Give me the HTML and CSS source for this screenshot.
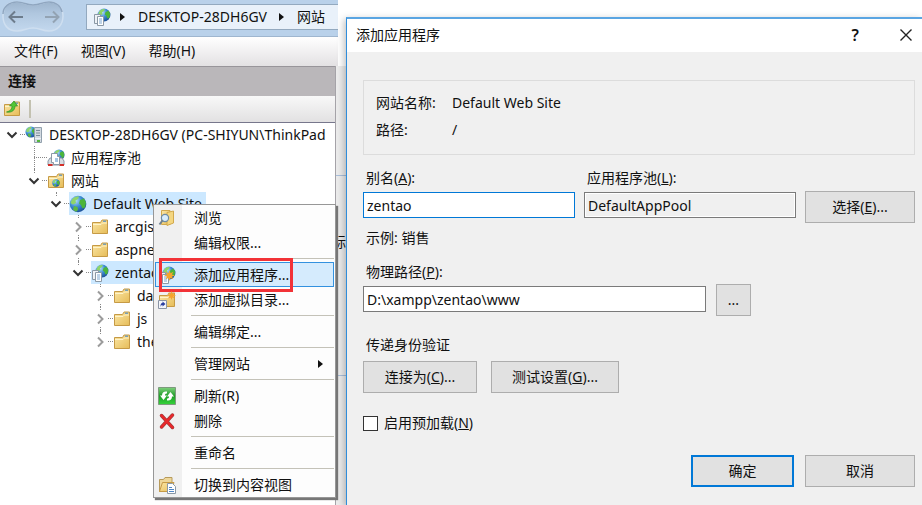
FILE: index.html
```html
<!DOCTYPE html>
<html lang="zh-CN">
<head>
    <meta charset="UTF-8">
    <meta name="viewport" content="width=device-width, initial-scale=1.0">
    <title>添加应用程序</title>
    <link rel="stylesheet" href="styles.css">
</head>
<body>
    <!-- Shared icons -->
    <svg class="sprite" aria-hidden="true">
        <defs>
            <radialGradient id="sea" cx="35%" cy="30%" r="75%">
                <stop offset="0" stop-color="#b5e0fa"/>
                <stop offset="0.5" stop-color="#3d8dd2"/>
                <stop offset="1" stop-color="#1a4d96"/>
            </radialGradient>
            <linearGradient id="yellow" x1="0" y1="0" x2="1" y2="1">
                <stop offset="0" stop-color="#fbe7a6"/>
                <stop offset="1" stop-color="#e6bc58"/>
            </linearGradient>
            <linearGradient id="green" x1="0" y1="0" x2="0" y2="1">
                <stop offset="0" stop-color="#7fd07c"/>
                <stop offset="0.5" stop-color="#1f9c28"/>
                <stop offset="1" stop-color="#35d53a"/>
            </linearGradient>
            <linearGradient id="capsule" x1="0" y1="0" x2="0" y2="1">
                <stop offset="0" stop-color="#9db4cd"/>
                <stop offset="0.4" stop-color="#b0c7df"/>
                <stop offset="1" stop-color="#c3d8ee"/>
            </linearGradient>
        </defs>
        <symbol id="globe" viewBox="0 0 18 18">
            <circle cx="9" cy="9" r="8.3" fill="url(#sea)"/>
            <path d="M3 4.500C5 1.800 8 1 10 1.600L9 4 6.500 5.500 7 8 4 9.500 1.500 8z" fill="#8fd568"/>
            <path d="M11 5l4-1.500 2 4-1 5-2.500 1L12 10l-2-1.500z" fill="#4cb53a"/>
            <path d="M5 11l3.500 1 .5 3-2 1.800-3-2z" fill="#5db843"/>
        </symbol>
        <symbol id="folder" viewBox="0 0 18 18">
            <path d="M1.500 4.500h8L11 2h5.500v13.500h-15z" fill="url(#yellow)" stroke="#c69a45"/>
            <path d="M2 6.500h8l1.500-1.500H16" fill="none" stroke="#fff3c9"/>
            <path d="M12 3.200h3" stroke="#5a94c4" stroke-width="1.200"/>
        </symbol>
        <symbol id="pages" viewBox="0 0 18 18">
            <path d="M1.500 6.500h6v9h-6z" fill="#eef2f6" stroke="#8b98a5"/>
            <path d="M4.500 8.500h6v9h-6z" fill="#fff" stroke="#8b98a5"/>
            <path d="M6 11h3M6 13h3M6 15h3" stroke="#7da7d0"/>
        </symbol>
        <symbol id="app" viewBox="0 0 18 18">
            <use href="#globe" x="4" y="0" width="14" height="14"/>
            <use href="#pages" width="18" height="18"/>
        </symbol>
        <symbol id="server" viewBox="0 0 18 18">
            <use href="#globe" x="0" y="0" width="12" height="12"/>
            <path d="M9.500 1.500h7v15h-7z" fill="#d3dae1" stroke="#92a0ad"/>
            <path d="M11 4.500h4M11 7h4M11 9.500h4" stroke="#7d8d9b"/>
            <path d="M10 12.500h6" stroke="#eef3f6"/>
            <path d="M12 14h3v2h-3z" fill="#54b63e"/>
        </symbol>
        <symbol id="pool" viewBox="0 0 18 18">
            <use href="#globe" x="6" y="0" width="12" height="12"/>
            <path d="M1 12l2-3h12l2 3v4H1z" fill="#d7dce2" stroke="#8b98a5"/>
            <path d="M1 16h4.500M12.500 16H17" stroke="#d3302a" stroke-width="2"/>
            <path d="M4.500 4.500h6v3h2v8h-6v-2h-2z" fill="#fff" stroke="#8b98a5"/>
            <path d="M8 10h3M8 12h3" stroke="#4c8bc8"/>
        </symbol>
        <symbol id="sites" viewBox="0 0 18 18">
            <use href="#folder" width="18" height="18"/>
            <use href="#globe" x="5" y="7" width="8" height="8"/>
        </symbol>
        <symbol id="star" viewBox="0 0 10 10">
            <path d="M5 0l1 3 2.500-1.500L7.200 4 10 5 7.200 6 8.500 8.500 6 7.200 5 10 4 7.200 1.500 8.500 2.800 6 0 5l2.800-1L1.500 1.500 4 3z" fill="#f6a42c"/>
        </symbol>
        <symbol id="connect" viewBox="0 0 18 18">
            <use href="#folder" width="18" height="18"/>
            <path d="M3.500 12C7.500 11 9 9 9 6H6.500L11 1l3.500 5H12c0 4-3 7-8.500 6z" fill="#52c637" stroke="#2f8f22" stroke-width=".7"/>
        </symbol>
        <symbol id="browse" viewBox="0 0 18 18">
            <path d="M3.500 1.500H12v14H3.500z" fill="url(#yellow)" stroke="#d2a94d"/>
            <path d="M9 3.500l6.500-1.500v12L9 16.500z" fill="#f4d680" stroke="#d2a94d"/>
            <circle cx="7" cy="9" r="3.600" fill="#d9edfb" stroke="#6d8ba6" stroke-width="1.200"/>
            <path d="M4.500 11.500L1.500 15.500" stroke="#6f8193" stroke-width="2"/>
        </symbol>
        <symbol id="app-new" viewBox="0 0 18 18">
            <use href="#app" width="18" height="18"/>
            <use href="#star" x="6" y="4" width="11" height="11"/>
        </symbol>
        <symbol id="dir-new" viewBox="0 0 18 18">
            <use href="#folder" width="18" height="18"/>
            <path d="M.5 9.500h8v8h-8z" fill="#f4f6fa" stroke="#8a94a5"/>
            <path d="M2.500 16c0-2 0-4 2-4v-1.500l3 2.500-3 2.500V14c-1 0-1.500.5-2 2z" fill="#2a3fa0"/>
            <use href="#star" x="9" y="0" width="9" height="9"/>
        </symbol>
        <symbol id="refresh" viewBox="0 0 18 18">
            <path d="M.5.5h17v17H.5z" fill="url(#green)" stroke="#7d9a7d"/>
            <path d="M9 4.500C6 4 4 5.500 4 8.500H2L5.500 13 9 8.500H7C7 7 7.500 6.500 9 6.500z" fill="#fff"/>
            <path d="M9 13.500c3 .5 5-1 5-4h2L12.500 5 9 9.500h2c0 1.500-.5 2-2 2z" fill="#fff"/>
        </symbol>
        <symbol id="delete" viewBox="0 0 18 18">
            <path d="M3.500 3.500l11 12M14.500 3L3.500 15" fill="none" stroke="#9c3a3a" stroke-width="3.500" stroke-linecap="round"/>
            <path d="M3.500 3.500l11 12M14.500 3L3.500 15" fill="none" stroke="#e8282b" stroke-width="2.500" stroke-linecap="round"/>
        </symbol>
        <symbol id="content" viewBox="0 0 18 18">
            <path d="M1.500 15.500v-12h4L7 1.500h7v13z" fill="#eed79a" stroke="#b79a5b"/>
            <path d="M1.500 15.500l3-9H16l-3 9z" fill="url(#yellow)" stroke="#c69a45"/>
            <path d="M9.500 7.500h5l3 3v7h-8z" fill="#fff" stroke="#8b98a5"/>
            <path d="M11 11.500h3M11 13.500h5M11 15.500h5" stroke="#4f86c6"/>
        </symbol>
        <symbol id="chevron-down" viewBox="0 0 16 16">
            <path d="M3.500 5.500L8 10l4.500-4.500" fill="none" stroke="#333" stroke-width="2"/>
        </symbol>
        <symbol id="chevron-right" viewBox="0 0 16 16">
            <path d="M6 3.500l4.500 4.500L6 12.500" fill="none" stroke="#9b9b9b" stroke-width="2"/>
        </symbol>
        <symbol id="triangle" viewBox="0 0 16 16">
            <path d="M6 4l5 4-5 4z" fill="#111"/>
        </symbol>
    </svg>

    <div class="screen">
        <main class="manager">
            <header class="address-bar">
                <svg class="nav-arrows" viewBox="0 0 66 36" aria-hidden="true">
                    <path d="M17 2C24 2 26 5 33 5S42 2 49 2C58 2 63 8 63 16S58 31 49 31C42 31 40 28 33 28S24 31 17 31C8 31 3 25 3 16S8 2 17 2z" fill="url(#capsule)" stroke="#cfdff0" stroke-width="1.500"/>
                    <path d="M3 14C3 7 9 2 17 2 24 2 26 5 33 5S42 2 49 2c7 0 12 4 13 10" fill="none" stroke="#8fa6c0" stroke-width="1.500"/>
                    <path d="M23 17H10M15 11.500L9.500 17l5.500 5.500" fill="none" stroke="#6d7c8c" stroke-width="2"/>
                    <path d="M45 17h13M53 11.500l5.500 5.500-5.500 5.500" fill="none" stroke="#93a3b3" stroke-width="2"/>
                </svg>
                <nav class="address">
                    <svg class="icon"><use href="#app"/></svg>
                    <svg class="arrow"><use href="#triangle"/></svg>
                    <a href="#server-node">DESKTOP-28DH6GV</a>
                    <svg class="arrow"><use href="#triangle"/></svg>
                    <a href="#sites-node">网站</a>
                </nav>
            </header>

            <nav class="menu-bar">
                <button type="button">文件(F)</button>
                <button type="button">视图(V)</button>
                <button type="button">帮助(H)</button>
            </nav>

            <div class="workspace">
                <section class="connections">
                    <h2>连接</h2>
                    <div class="toolbar">
                        <button type="button" aria-label="连接"><svg class="icon"><use href="#connect"/></svg></button>
                        <span class="divider"></span>
                    </div>
                    <ul class="tree">
                        <li>
                            <div class="row" id="server-node">
                                <button type="button" class="toggle" aria-label="折叠"><svg><use href="#chevron-down"/></svg></button>
                                <span class="node"><svg class="icon"><use href="#server"/></svg>DESKTOP-28DH6GV (PC-SHIYUN\ThinkPad</span>
                            </div>
                            <ul>
                                <li>
                                    <div class="row leaf">
                                        <span class="node"><svg class="icon"><use href="#pool"/></svg>应用程序池</span>
                                    </div>
                                </li>
                                <li>
                                    <div class="row" id="sites-node">
                                        <button type="button" class="toggle" aria-label="折叠"><svg><use href="#chevron-down"/></svg></button>
                                        <span class="node"><svg class="icon"><use href="#sites"/></svg>网站</span>
                                    </div>
                                    <ul>
                                        <li>
                                            <div class="row">
                                                <button type="button" class="toggle" aria-label="折叠"><svg><use href="#chevron-down"/></svg></button>
                                                <span class="node selected"><svg class="icon"><use href="#globe"/></svg>Default Web Site</span>
                                            </div>
                                            <ul>
                                                <li>
                                                    <div class="row">
                                                        <button type="button" class="toggle" aria-label="展开"><svg><use href="#chevron-right"/></svg></button>
                                                        <span class="node"><svg class="icon"><use href="#folder"/></svg>arcgis</span>
                                                    </div>
                                                </li>
                                                <li>
                                                    <div class="row">
                                                        <button type="button" class="toggle" aria-label="展开"><svg><use href="#chevron-right"/></svg></button>
                                                        <span class="node"><svg class="icon"><use href="#folder"/></svg>aspnet</span>
                                                    </div>
                                                </li>
                                                <li>
                                                    <div class="row">
                                                        <button type="button" class="toggle" aria-label="折叠"><svg><use href="#chevron-down"/></svg></button>
                                                        <span class="node selected"><svg class="icon"><use href="#app"/></svg>zentao</span>
                                                    </div>
                                                    <ul>
                                                        <li>
                                                            <div class="row">
                                                                <button type="button" class="toggle" aria-label="展开"><svg><use href="#chevron-right"/></svg></button>
                                                                <span class="node"><svg class="icon"><use href="#folder"/></svg>data</span>
                                                            </div>
                                                        </li>
                                                        <li>
                                                            <div class="row">
                                                                <button type="button" class="toggle" aria-label="展开"><svg><use href="#chevron-right"/></svg></button>
                                                                <span class="node"><svg class="icon"><use href="#folder"/></svg>js</span>
                                                            </div>
                                                        </li>
                                                        <li>
                                                            <div class="row">
                                                                <button type="button" class="toggle" aria-label="展开"><svg><use href="#chevron-right"/></svg></button>
                                                                <span class="node"><svg class="icon"><use href="#folder"/></svg>theme</span>
                                                            </div>
                                                        </li>
                                                    </ul>
                                                </li>
                                            </ul>
                                        </li>
                                    </ul>
                                </li>
                            </ul>
                        </li>
                    </ul>
                </section>
                <section class="content-pane">
                    <div class="pane-head"></div>
                    <div class="pane-body">标</div>
                    <div class="pane-foot"></div>
                </section>
            </div>

            <div class="context-menu">
                <button type="button"><svg class="icon"><use href="#browse"/></svg>浏览</button>
                <button type="button">编辑权限...</button>
                <hr>
                <button type="button" class="active"><svg class="icon"><use href="#app-new"/></svg>添加应用程序...<span class="marker"></span></button>
                <button type="button"><svg class="icon"><use href="#dir-new"/></svg>添加虚拟目录...</button>
                <hr>
                <button type="button">编辑绑定...</button>
                <hr>
                <button type="button">管理网站<svg class="submenu"><use href="#triangle"/></svg></button>
                <hr>
                <button type="button"><svg class="icon"><use href="#refresh"/></svg>刷新(R)</button>
                <button type="button"><svg class="icon"><use href="#delete"/></svg>删除</button>
                <hr>
                <button type="button">重命名</button>
                <hr>
                <button type="button"><svg class="icon"><use href="#content"/></svg>切换到内容视图</button>
            </div>
        </main>

        <section class="dialog" role="dialog" aria-labelledby="dialog-title">
            <header class="title-bar">
                <h1 id="dialog-title">添加应用程序</h1>
                <button type="button" aria-label="帮助">?</button>
                <button type="button" aria-label="关闭">
                    <svg viewBox="0 0 14 14"><path d="M1.500 1.500l11 11M12.500 1.500l-11 11" stroke="#222" stroke-width="1.400"/></svg>
                </button>
            </header>

            <form class="dialog-body">
                <dl class="summary">
                    <dt>网站名称:</dt>
                    <dd>Default Web Site</dd>
                    <dt>路径:</dt>
                    <dd>/</dd>
                </dl>

                <div class="alias-row">
                    <div class="field">
                        <label for="alias">别名(<u>A</u>):</label>
                        <input type="text" id="alias" class="focused" value="zentao">
                    </div>
                    <div class="field">
                        <label for="pool-name">应用程序池(<u>L</u>):</label>
                        <input type="text" id="pool-name" value="DefaultAppPool" readonly>
                    </div>
                    <button type="button" class="btn">选择(<u>E</u>)...</button>
                </div>
                <p class="hint">示例: 销售</p>

                <div class="path-row">
                    <div class="field">
                        <label for="path">物理路径(<u>P</u>):</label>
                        <input type="text" id="path" value="D:\xampp\zentao\www">
                    </div>
                    <button type="button" class="btn">...</button>
                </div>

                <p class="auth-title">传递身份验证</p>
                <div class="auth-row">
                    <button type="button" class="btn connect-as">连接为(<u>C</u>)...</button>
                    <button type="button" class="btn test">测试设置(<u>G</u>)...</button>
                </div>

                <div class="preload">
                    <input type="checkbox" id="preload">
                    <label for="preload">启用预加载(<u>N</u>)</label>
                </div>

                <footer class="actions">
                    <button type="submit" class="btn primary">确定</button>
                    <button type="button" class="btn cancel">取消</button>
                </footer>
            </form>
        </section>
    </div>
</body>
</html>
```

FILE: styles.css
```css
:root {
    --face: #f0f0f0;
    --accent: #0078d7;
    --window-border: #2f8ddb;
    --selected: #cce8ff;
    --text: #111;
}

* {
    box-sizing: border-box;
    margin: 0;
    padding: 0;
}

body {
    font-family: "Noto Sans", "Noto Sans CJK SC", sans-serif;
    font-size: 14px;
    line-height: 20px;
    color: var(--text);
    background-color: white;
    overflow: hidden;
}

button, input {
    font: inherit;
    color: inherit;
}

button {
    border: none;
    background: none;
    white-space: nowrap;
}

a {
    color: inherit;
    text-decoration: none;
}

ul {
    list-style: none;
}

.sprite {
    position: absolute;
    width: 0;
    height: 0;
}

.icon {
    width: 18px;
    height: 18px;
    flex: none;
}

.screen {
    display: flex;
    min-height: 100vh;
}

/* IIS manager window */
.manager {
    position: relative;
    display: flex;
    flex-direction: column;
    flex: 0 0 346px;
    min-width: 0;
}

.address-bar,
.menu-bar {
    display: flex;
    margin-right: 8px;
}

.address-bar {
    height: 37px;
    background-color: #b9d1ea;
    border-bottom: 1px solid #9fb6cf;
}

.nav-arrows {
    width: 66px;
    height: 36px;
}

.address {
    flex: 1;
    display: flex;
    align-items: center;
    height: 26px;
    margin: 4px 0 0 20px;
    padding-left: 6px;
    background-color: #e9f1fa;
    border: 1px solid #93a9bf;
    border-right: none;
    white-space: nowrap;
}

.address a {
    margin-right: 3px;
}

.address .arrow {
    flex: none;
    width: 16px;
    height: 16px;
    margin: 0 8px 0 3px;
}

.menu-bar {
    height: 29px;
    gap: 23px;
    padding-left: 14px;
    padding-bottom: 2px;
    background: linear-gradient(#fff, #e3e1e3);
}

.workspace {
    flex: 1;
    display: flex;
}

.connections {
    flex: none;
    width: 336px;
    border-right: 1px solid #a5a3a8;
    background-color: white;
}

.connections h2 {
    height: 30px;
    padding-left: 8px;
    font-size: 14px;
    line-height: 28px;
    background-color: #bab7ba;
    border-top: 1px solid #98959a;
}

.toolbar {
    display: flex;
    align-items: center;
    gap: 8px;
    height: 27px;
    padding-left: 3px;
    background: linear-gradient(#f8f8f8, #e2e1e2);
    border-bottom: 1px solid #77778c;
}

.toolbar button {
    display: flex;
}

.toolbar .divider {
    width: 2px;
    height: 18px;
    background-color: #c3c1b0;
}

/* Connection tree */
.tree {
    padding-left: 4px;
}

.tree ul {
    padding-left: 22px;
}

.tree ul li {
    position: relative;
}

.tree ul li::before {
    content: "";
    position: absolute;
    left: 8px;
    top: 0;
    bottom: 0;
    border-left: 1px dotted #888;
}

.tree ul li:last-child::before {
    bottom: auto;
    height: 12px;
}

.row {
    position: relative;
    display: flex;
    align-items: center;
    height: 23px;
}

.row::before {
    content: "";
    order: 1;
    width: 5px;
    border-top: 1px dotted #888;
}

.row.leaf::before {
    width: 13px;
    margin-left: 8px;
}

.toggle {
    display: flex;
    width: 16px;
    height: 16px;
    background-color: white;
}

.toggle svg {
    width: 16px;
    height: 16px;
}

.node {
    order: 2;
    display: flex;
    align-items: center;
    gap: 6px;
    height: 23px;
    padding-right: 4px;
    white-space: nowrap;
}

.node.selected {
    background-color: var(--selected);
}

/* Sliver of the feature view behind the dialog */
.content-pane {
    flex: 1;
    display: flex;
    flex-direction: column;
    min-width: 0;
    background-color: #ececec;
    overflow: hidden;
}

.pane-head {
    height: 110px;
    border-bottom: 1px solid #a9bfdb;
}

.pane-body {
    display: flex;
    justify-content: flex-end;
    height: 200px;
    padding-top: 56px;
    border-bottom: 1px solid #a9bfdb;
}

/* Context menu */
.context-menu {
    position: absolute;
    left: 153px;
    top: 204px;
    width: 183px;
    padding: 0 1px;
    background: linear-gradient(to right, #f0f0f0 28px, #fdfdfd 28px);
    border: 1px solid #979797;
    box-shadow: 2px 2px 1px #777;
}

.context-menu button {
    position: relative;
    display: flex;
    align-items: center;
    width: 100%;
    height: 25px;
    padding-left: 38px;
    border: 1px solid transparent;
}

.context-menu .icon {
    margin-left: -36px;
    margin-right: 18px;
}

.context-menu .submenu {
    width: 16px;
    height: 16px;
    margin-left: auto;
    margin-right: 5px;
}

.context-menu .active {
    background-color: #d5ebfd;
    border-color: #3391df;
}

.context-menu hr {
    height: 1px;
    margin: 3px 0 3px 36px;
    border: none;
    background-color: #c4c2b8;
}

.marker {
    position: absolute;
    left: 3px;
    top: -5px;
    width: 134px;
    height: 34px;
    border: 3px solid #f23237;
}

/* Add application dialog */
.dialog {
    position: relative;
    flex: 1;
    display: flex;
    flex-direction: column;
    margin-top: 17px;
    background-color: var(--face);
    border-top: 2px solid #5aa5e2;
    border-left: 1px solid var(--window-border);
    box-shadow: -2px 2px 7px rgba(0, 0, 0, 0.25);
}

.title-bar {
    display: flex;
    align-items: center;
    gap: 40px;
    height: 33px;
    padding: 0 9px 2px;
    background-color: white;
}

.title-bar h1 {
    flex: 1;
    font-size: 14px;
    font-weight: normal;
}

.title-bar button {
    font-weight: 600;
    font-size: 16px;
}

.title-bar svg {
    display: block;
    width: 14px;
    height: 14px;
}

.dialog-body {
    flex: 1;
    display: flex;
    flex-direction: column;
    padding: 28px 7px 18px 16px;
}

.summary {
    display: grid;
    grid-template-columns: 76px 1fr;
    align-content: start;
    row-gap: 7px;
    padding: 12px;
    height: 75px;
    border: 1px solid #dcdcdc;
}

.field {
    display: flex;
    flex-direction: column;
    gap: 4px;
}

.field label,
.hint,
.auth-title {
    padding-left: 3px;
}

.field input {
    width: 100%;
    height: 26px;
    padding: 0 3px;
    border: 1px solid #7a7a7a;
    background-color: white;
    outline: none;
}

.field input.focused {
    border: 1px solid var(--accent);
}

.field input[readonly] {
    background-color: var(--face);
    box-shadow: inset 0 0 0 1px white;
}

.btn {
    height: 32px;
    background-color: #e1e1e1;
    border: 1px solid #adadad;
}

.alias-row {
    display: grid;
    grid-template-columns: 1fr 1fr 110px;
    gap: 9px;
    margin-top: 13px;
}

.alias-row .btn {
    margin-top: 23px;
}

.hint {
    margin-top: 5px;
}

.path-row {
    display: grid;
    grid-template-columns: 343px 35px;
    gap: 10px;
    margin-top: 14px;
}

.path-row .btn {
    margin-top: 22px;
}

.auth-title {
    margin-top: 19px;
}

.auth-row {
    display: flex;
    gap: 14px;
    margin-top: 6px;
}

.connect-as {
    width: 114px;
}

.test {
    width: 128px;
}

.preload {
    display: flex;
    align-items: center;
    gap: 6px;
    margin-top: 20px;
}

.preload input {
    appearance: none;
    width: 15px;
    height: 15px;
    background-color: white;
    border: 1px solid #333;
}

.actions {
    display: flex;
    justify-content: flex-end;
    gap: 11px;
    margin-top: auto;
}

.primary {
    width: 103px;
    border: 2px solid var(--accent);
}

.cancel {
    width: 110px;
}
```
